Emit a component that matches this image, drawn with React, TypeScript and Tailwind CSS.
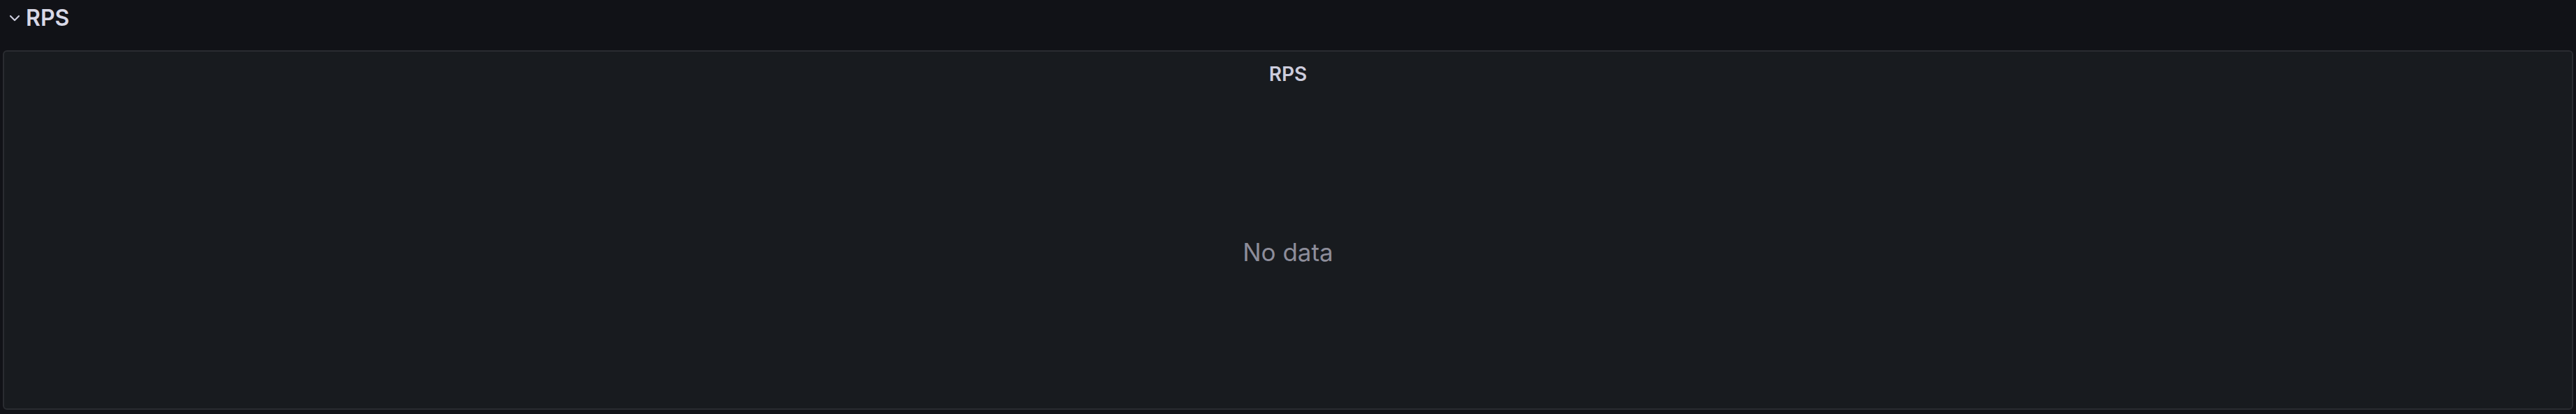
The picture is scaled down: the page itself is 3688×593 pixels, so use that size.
import React from "react";

export default function App() {
  return (
    <div
      className="w-[3688px] h-[593px] bg-[#111217] flex flex-col px-[4px] pb-[6px] overflow-hidden"
      style={{ fontFamily: "Inter, 'Noto Sans', sans-serif" }}
    >
      <div className="h-[52px] flex items-center shrink-0">
        <svg
          className="ml-[9px] mr-[8px]"
          width="16"
          height="10"
          viewBox="0 0 16 10"
          fill="none"
        >
          <path
            d="M2 2 L8 8 L14 2"
            stroke="#ccccdc"
            strokeWidth="2.2"
            strokeLinecap="round"
            strokeLinejoin="round"
          />
        </svg>
        <span className="text-[32px] font-semibold text-[#d8d8e6] leading-none">
          RPS
        </span>
      </div>
      <div className="mt-[20px] flex-1 flex flex-col rounded-[6px] border-2 border-[#2a2c31] bg-[#181b1f]">
        <div className="h-[64px] flex items-center justify-center shrink-0">
          <span className="text-[28px] font-semibold text-[#ccccdc] leading-none">
            RPS
          </span>
        </div>
        <div className="flex-1 flex items-center justify-center">
          <span className="text-[35px] text-[#8d8d9a] leading-none">
            No data
          </span>
        </div>
      </div>
    </div>
  );
}
